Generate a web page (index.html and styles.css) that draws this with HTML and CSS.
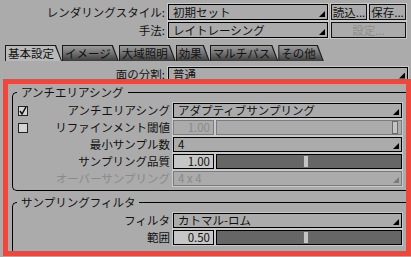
FILE: index.html
```html
<!DOCTYPE html>
<html lang="ja">
<head>
    <meta charset="UTF-8">
    <meta name="viewport" content="width=device-width, initial-scale=1.0">
    <title>レンダリング設定</title>
    <link rel="stylesheet" href="styles.css">
</head>
<body>
    <div class="panel">
        <div class="row">
            <span class="lbl">レンダリングスタイル:</span>
            <div class="select w-style">初期セット</div>
            <div class="btn first">読込...</div>
            <div class="btn">保存...</div>
        </div>
        <div class="row">
            <span class="lbl">手法:</span>
            <div class="select w-style">レイトレーシング</div>
            <div class="btn first wide off">設定...</div>
        </div>

        <div class="tabs">
            <div class="tab active"><span>基本設定</span></div>
            <div class="tab"><span>イメージ</span></div>
            <div class="tab"><span>大域照明</span></div>
            <div class="tab"><span>効果</span></div>
            <div class="tab"><span>マルチパス</span></div>
            <div class="tab"><span>その他</span></div>
        </div>

        <div class="row subdiv">
            <span class="lbl">面の分割:</span>
            <div class="select w-wide">普通</div>
        </div>

        <div class="group">
            <div class="group-title">アンチエリアシング</div>
            <div class="grid">
                <div class="check on">
                    <svg width="8" height="8" viewBox="0 0 8 8"><polyline points="1,4 3,7 7,0" fill="none" stroke="#111" stroke-width="1.5"/></svg>
                </div>
                <span class="glbl">アンチエリアシング</span>
                <div class="select">アダプティブサンプリング</div>

                <div class="check"></div>
                <span class="glbl">リファインメント閾値</span>
                <div class="num-row">
                    <div class="num off">1.00</div>
                    <div class="slider off"><div class="thumb" style="left: 97%"></div></div>
                </div>

                <span></span>
                <span class="glbl">最小サンプル数</span>
                <div class="select">4</div>

                <span></span>
                <span class="glbl">サンプリング品質</span>
                <div class="num-row">
                    <div class="num">1.00</div>
                    <div class="slider"><div class="thumb" style="left: 48.5%"></div></div>
                </div>

                <span></span>
                <span class="glbl off">オーバーサンプリング</span>
                <div class="select off">4 x 4</div>
            </div>
        </div>

        <div class="group second">
            <div class="group-title">サンプリングフィルタ</div>
            <div class="grid">
                <span></span>
                <span class="glbl">フィルタ</span>
                <div class="select">カトマル-ロム</div>

                <span></span>
                <span class="glbl">範囲</span>
                <div class="num-row">
                    <div class="num">0.50</div>
                    <div class="slider"><div class="thumb" style="left: 48.5%"></div></div>
                </div>
            </div>
        </div>
    </div>

    <div class="highlight"></div>
</body>
</html>
```

FILE: styles.css
```css
* {
    margin: 0;
    padding: 0;
    box-sizing: border-box;
}
body {
    width: 411px;
    height: 257px;
    overflow: hidden;
    position: relative;
    background: #ababab;
    color: #111;
    font-family: "Noto Sans CJK JP", "Noto Sans", sans-serif;
    font-size: 11.5px;
    line-height: 15px;
}
.panel {
    padding-top: 4px;
}
.row {
    display: flex;
    align-items: center;
    height: 16px;
    margin-bottom: 2px;
}
.lbl {
    width: 168px;
    padding-right: 3px;
    text-align: right;
    white-space: nowrap;
}
.select {
    position: relative;
    height: 15px;
    padding-left: 4px;
    border: 1px solid #000;
    box-shadow: 0 0 0 1px #c9c9c9;
    background: #ababab;
    line-height: 13px;
    white-space: nowrap;
    overflow: hidden;
}
.select::after {
    content: "";
    position: absolute;
    right: 2px;
    bottom: 2px;
    width: 6px;
    height: 6px;
    background: #000;
    clip-path: polygon(100% 0, 100% 100%, 0 100%);
}
.row .select {
    height: 16px;
    line-height: 14px;
}
.select.off {
    color: #8a8a8a;
    border-color: #7a7a7a;
}
.select.off::after {
    background: #7a7a7a;
}
.w-style {
    width: 160px;
}
.w-wide {
    width: 240px;
}
.btn {
    width: 37px;
    height: 16px;
    margin-left: 2px;
    border: 1px solid #111;
    box-shadow: 0 0 0 1px #c9c9c9;
    text-align: center;
    line-height: 14px;
}
.btn.first {
    width: 36px;
    margin-left: 3px;
}
.btn.wide {
    width: 75px;
}
.btn.off {
    color: #8e8e8e;
}

/* tabs */
.tabs {
    display: flex;
    margin: 7px 0 0 5px;
    height: 16px;
}
.tab {
    background: #1a1a1a;
    clip-path: polygon(0 0, calc(100% - 6px) 0, 100% 100%, 0 100%);
    padding: 1px 0 0 1px;
}
.tab span {
    display: block;
    height: 15px;
    padding: 0 8px 0 2px;
    background: linear-gradient(#9c9c9c, #747474 45%, #3c3c3c);
    clip-path: polygon(0 0, calc(100% - 7px) 0, calc(100% - 1px) 100%, 0 100%);
    line-height: 15px;
    white-space: nowrap;
}
.tab.active span {
    background: #b9b9b9;
}
.subdiv {
    margin-top: 5px;
    margin-bottom: 0;
}
.subdiv .select {
    height: 15px;
    line-height: 13px;
}

/* groups */
.group {
    margin: 10px 0 0 12px;
    padding-bottom: 4px;
    border: 1px solid #000;
    border-right: none;
    border-radius: 5px 0 0 5px;
}
.group.second {
    margin-top: 11px;
    height: 53px;
}
.group-title {
    width: fit-content;
    margin: -7px 0 4px 4px;
    padding: 0 4px;
    background: #ababab;
    line-height: 13px;
}
.grid {
    display: grid;
    grid-template-columns: 10px 145px 229px;
    grid-auto-rows: 15px;
    row-gap: 2px;
    padding-left: 5px;
    align-items: center;
}
.glbl {
    padding-right: 3px;
    text-align: right;
    white-space: nowrap;
}
.glbl.off {
    color: #8a8a8a;
}
.check {
    width: 10px;
    height: 10px;
    border: 1px solid #222;
    background: #d4d4d4;
    display: flex;
    align-items: center;
    justify-content: center;
}
.num-row {
    display: flex;
    gap: 2px;
    height: 15px;
}
.num {
    width: 41px;
    padding-right: 3px;
    border: 1px solid #000;
    box-shadow: 0 0 0 1px #c9c9c9;
    background: #c6c6c6;
    text-align: right;
    line-height: 13px;
}
.num.off {
    color: #8a8a8a;
    border-color: #7c7c7c;
    background: #ababab;
}
.slider {
    position: relative;
    flex: 1;
    border: 1px solid #000;
    box-shadow: 0 0 0 1px #c9c9c9;
    background: #666;
}
.slider.off {
    border-color: #7c7c7c;
    background: #ababab;
}
.thumb {
    position: absolute;
    top: 0;
    bottom: 0;
    width: 6px;
    margin-left: -3px;
    border: 1px solid #6a6a6a;
    background: #c4c4c4;
}

/* annotation frame */
.highlight {
    position: absolute;
    left: 3px;
    top: 79px;
    width: 408px;
    height: 177px;
    border: 5px solid #f1463b;
}
```
